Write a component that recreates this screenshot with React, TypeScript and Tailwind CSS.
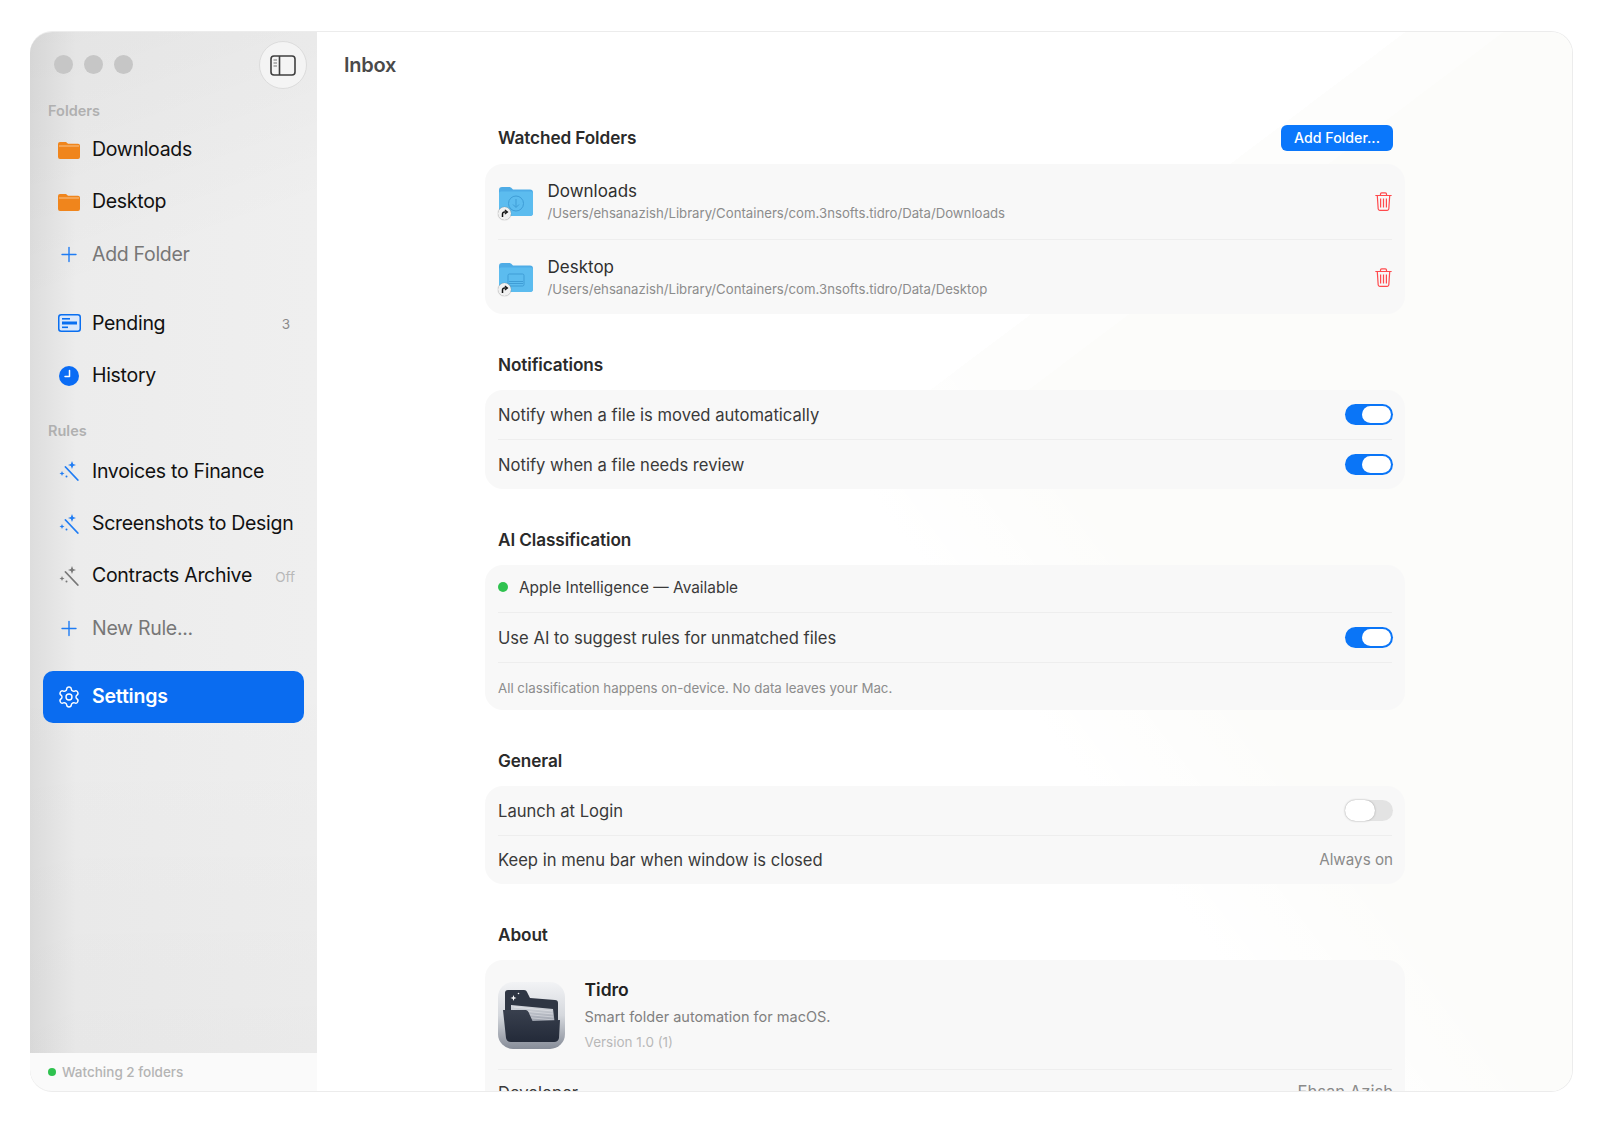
import type { ReactNode } from 'react'
import { Plus, Settings } from 'lucide-react'

function OrangeFolder() {
  return (
    <svg width="22" height="18" viewBox="0 0 22 18">
      <path d="M0 3a2 2 0 0 1 2-2h5c1 0 1.500.3 2.200 1l.8.800H20a2 2 0 0 1 2 2V16a2 2 0 0 1-2 2H2a2 2 0 0 1-2-2Z" fill="#f0851c" />
      <path d="M1 5h20" stroke="#f9c48c" strokeWidth="1" />
    </svg>
  )
}

function PendingIcon() {
  return (
    <svg width="23" height="18" viewBox="0 0 23 18">
      <rect x="0.75" y="0.75" width="21.500" height="16.500" rx="2.500" fill="#dbe8fb" stroke="#0a6ff0" strokeWidth="1.500" />
      <rect x="4" y="4" width="8" height="1.600" fill="#0a6ff0" />
      <rect x="4" y="7.500" width="15" height="3" fill="#0a6ff0" />
      <rect x="4" y="12.500" width="6" height="1.600" fill="#0a6ff0" />
    </svg>
  )
}

function HistoryIcon() {
  return (
    <svg width="20" height="20" viewBox="0 0 20 20">
      <circle cx="10" cy="10" r="10" fill="#0a6cf5" />
      <path d="M10.500 4.500v6H6" fill="none" stroke="#fff" strokeWidth="1.500" strokeLinecap="round" strokeLinejoin="round" />
    </svg>
  )
}

function WandIcon({ color }: { color: string }) {
  return (
    <svg width="20" height="20" viewBox="0 0 20 20" fill={color}>
      <path d="M6.500 6l12.300 13" stroke={color} strokeWidth="1.800" strokeLinecap="round" />
      <path d="M13 0l1.100 2.900 2.900 1.100-2.900 1.100-1.100 2.900-1.100-2.900-2.900-1.100 2.900-1.100Z" />
      <path d="M3 10l.7 1.800 1.800.7-1.800.7-.7 1.800-.7-1.800-1.800-.7 1.800-.7Z" />
      <circle cx="7.500" cy="15.500" r="1" />
    </svg>
  )
}

function SidebarToggleIcon() {
  return (
    <svg width="26" height="21" viewBox="0 0 26 21" fill="none" stroke="#3f3f3f">
      <rect x="1" y="1" width="24" height="19" rx="3" strokeWidth="1.600" />
      <path d="M9.500 1v19" strokeWidth="1.600" />
      <path d="M3.500 5h3.500M3.500 8h3.500M3.500 11h3.500" strokeWidth="1.100" stroke="#777" />
    </svg>
  )
}

function TrashIcon() {
  return (
    <svg width="17" height="19" viewBox="0 0 17 19" fill="none" stroke="#ff4a4d" strokeWidth="1.200" strokeLinejoin="round">
      <path d="M.8 3.500h15.400" strokeLinecap="round" />
      <path d="M5.500 3.300V2a1.200 1.200 0 0 1 1.200-1.200h3.600A1.200 1.200 0 0 1 11.500 2v1.300" />
      <path d="M2.300 3.700l.9 13.300a1.500 1.500 0 0 0 1.500 1.300h7.600a1.500 1.500 0 0 0 1.500-1.300l.9-13.300" />
      <path d="M5.600 6.500v9M8.500 6.500v9M11.400 6.500v9" />
    </svg>
  )
}

function BlueFolder({ kind }: { kind: 'down' | 'desk' }) {
  return (
    <div className="relative w-[34px] h-[29px] shrink-0 ml-[1px]">
      <svg width="34" height="29" viewBox="0 0 34 29">
        <path d="M0 3a3 3 0 0 1 3-3h7c1.500 0 2 .5 3 1.500l1 1h17a3 3 0 0 1 3 3V26a3 3 0 0 1-3 3H3a3 3 0 0 1-3-3Z" fill="#4eace6" />
        <path d="M0 6.500a2 2 0 0 1 2-2h30a2 2 0 0 1 2 2V26a3 3 0 0 1-3 3H3a3 3 0 0 1-3-3Z" fill="#5cbcef" />
        {kind === 'down' ? (
          <g fill="none" stroke="#3f9dd6" strokeWidth="1">
            <circle cx="17" cy="16.500" r="7.500" />
            <path d="M17 12v8M14 17.500l3 3 3-3" />
          </g>
        ) : (
          <g fill="none" stroke="#3f9dd6" strokeWidth="1">
            <rect x="9" y="11" width="16" height="12" rx="1.500" />
            <path d="M10 18.500h14M10 20.500h14" />
          </g>
        )}
      </svg>
      <div className="absolute left-[-1px] top-[20px] w-[13px] h-[13px] rounded-full bg-[#f1f1f1] shadow-[0_0_1px_#666] flex items-center justify-center">
        <svg width="9" height="9" viewBox="0 0 9 9" fill="none" stroke="#111" strokeWidth="1.500">
          <path d="M2.500 8V5a2 2 0 0 1 2-2H7" />
          <path d="M4.800.9 7.500 3 4.800 5.100" strokeWidth="1.200" />
        </svg>
      </div>
    </div>
  )
}

function AppIcon() {
  return (
    <svg width="67" height="67" viewBox="0 0 67 67" className="shrink-0 mt-[2px]">
      <defs>
        <linearGradient id="tile" x1="0" y1="0" x2="0" y2="1">
          <stop offset="0" stopColor="#f2f3f5" />
          <stop offset="0.5" stopColor="#d5d8dd" />
          <stop offset="1" stopColor="#868c98" />
        </linearGradient>
        <linearGradient id="front" x1="0" y1="0" x2="0" y2="1">
          <stop offset="0" stopColor="#39404e" />
          <stop offset="1" stopColor="#232a39" />
        </linearGradient>
        <linearGradient id="paper" x1="0" y1="0" x2="0" y2="1">
          <stop offset="0" stopColor="#d8dbe0" />
          <stop offset="1" stopColor="#8d93a0" />
        </linearGradient>
      </defs>
      <rect width="67" height="67" rx="15" fill="url(#tile)" />
      <path d="M7 11a3 3 0 0 1 3-3h16c1.500 0 2.500.8 3 2l3 6 25 2a3 3 0 0 1 3 3v22H7Z" fill="#2f3643" />
      <path d="M13 23l42 4 2 16H13Z" fill="url(#paper)" />
      <path d="M16 25l38 4M15 28l40 4M14 31l41 4M14 34l42 4" stroke="#f3f4f6" strokeWidth="0.600" opacity="0.700" />
      <path d="M5 28h22c1.500 0 2.500.5 3.500 2l4 9 27.500-1-1 18a5 5 0 0 1-5 4H13a5 5 0 0 1-5-4Z" fill="url(#front)" />
      <path d="M15.500 13l.8 2.200 2.200.8-2.200.8-.8 2.200-.8-2.200-2.200-.8 2.200-.8Z" fill="#fff" />
      <circle cx="20.500" cy="11.500" r="0.800" fill="#fff" />
    </svg>
  )
}

function NavRow({ icon, label, muted, trailing }: { icon: ReactNode; label: string; muted?: boolean; trailing?: ReactNode }) {
  return (
    <div className="h-[52.4px] flex items-center gap-[11px] pl-[14px] pr-[9px]">
      <div className="w-[24px] flex justify-center shrink-0">{icon}</div>
      <span className={`text-[19.500px] tracking-[-0.3px] whitespace-nowrap ${muted ? 'text-[#777777]' : 'text-[#111111]'}`}>{label}</span>
      {trailing && <div className="ml-auto">{trailing}</div>}
    </div>
  )
}

function SectionLabel({ children, className }: { children: ReactNode; className: string }) {
  return <div className={`h-[20px] pl-[5px] flex items-center text-[14.500px] font-semibold text-[#b0b0b0] ${className}`}>{children}</div>
}

function Toggle({ on = true }: { on?: boolean }) {
  if (!on) {
    return (
      <div className="w-[48px] h-[21px] mr-[-1px] rounded-full bg-[#e3e3e3]">
        <div className="w-[30px] h-[21px] rounded-full bg-white shadow-[0_0_2px_#999]" />
      </div>
    )
  }
  return (
    <div className="w-[48px] h-[21px] mr-[-1px] rounded-full bg-[#0a75f7] flex items-center justify-end pr-[2px]">
      <div className="w-[29px] h-[17px] rounded-full bg-white" />
    </div>
  )
}

function Section({ title, action, children }: { title: string; action?: ReactNode; children: ReactNode }) {
  return (
    <section className="mb-[37px]">
      <div className="h-[26px] mb-[13px] px-[13px] flex items-center justify-between">
        <h2 className={`text-[17.200px] font-semibold tracking-[-0.1px] text-[#2a2a2a] ${action ? '' : 'mt-[2px]'}`}>{title}</h2>
        {action}
      </div>
      <div className="rounded-[18px] bg-[#f8f8f8] px-[13px]">{children}</div>
    </section>
  )
}

function Row({ label, height, last, children }: { label: ReactNode; height: string; last?: boolean; children?: ReactNode }) {
  return (
    <div className={`flex items-center justify-between text-[16.600px] text-[#3a3a3a] ${height} ${last ? '' : 'border-b border-[#eeeeee]'}`}>
      <div className="pt-[1px]">{label}</div>
      {children}
    </div>
  )
}

function WatchedRow({ kind, name, path, height, last }: { kind: 'down' | 'desk'; name: string; path: string; height: string; last?: boolean }) {
  return (
    <div className={`flex items-center ${height} ${last ? '' : 'border-b border-[#eeeeee]'}`}>
      <BlueFolder kind={kind} />
      <div className="ml-[14.500px] pt-[1px]">
        <div className="text-[17px] leading-[22px] text-[#2f2f2f]">{name}</div>
        <div className="text-[13.200px] leading-[22px] text-[#8c8c8c]">{path}</div>
      </div>
      <div className="ml-auto"><TrashIcon /></div>
    </div>
  )
}

export default function App() {
  return (
    <div className="w-[1600px] h-[1126px] bg-white pt-[31px] pl-[30px] font-['Inter',sans-serif]">
      <div className="w-[1543px] h-[1061px] flex rounded-[22px] overflow-hidden border-t border-r border-b border-[#ececec]">
        <aside className="w-[287px] shrink-0 flex flex-col bg-[linear-gradient(160deg,rgba(0,0,0,0.035),transparent_260px),linear-gradient(180deg,transparent_60%,rgba(0,0,0,0.025)),linear-gradient(90deg,#dddddd_0%,#ececec_16%,#efefef_100%)]">
          <div className="h-[69px] shrink-0 flex items-start justify-between pl-[24px] pr-[10px] pt-[9px]">
            <div className="flex gap-[11.500px] pt-[14px]">
              <div className="w-[18.500px] h-[18.500px] rounded-full bg-[#c6c6c6]" />
              <div className="w-[18.500px] h-[18.500px] rounded-full bg-[#c6c6c6]" />
              <div className="w-[18.500px] h-[18.500px] rounded-full bg-[#c6c6c6]" />
            </div>
            <div className="w-[48px] h-[48px] rounded-full bg-[#f4f4f4] border border-[#dcdcdc] flex items-center justify-center">
              <SidebarToggleIcon />
            </div>
          </div>
          <div className="flex-1 pl-[13px] pr-[13px]">
            <SectionLabel className="mb-[2.500px]">Folders</SectionLabel>
            <NavRow icon={<OrangeFolder />} label="Downloads" />
            <NavRow icon={<OrangeFolder />} label="Desktop" />
            <NavRow icon={<Plus size={27} strokeWidth={1.400} color="#1f7cf4" />} label="Add Folder" muted />
            <div className="mt-[16.500px]">
              <NavRow icon={<PendingIcon />} label="Pending" trailing={<span className="mr-[5px] text-[13.500px] text-[#8a8a8a]">3</span>} />
              <NavRow icon={<HistoryIcon />} label="History" />
            </div>
            <div className="mt-[19px]">
              <SectionLabel className="mb-[4px]">Rules</SectionLabel>
              <NavRow icon={<WandIcon color="#1f7cf4" />} label="Invoices to Finance" />
              <NavRow icon={<WandIcon color="#1f7cf4" />} label="Screenshots to Design" />
              <NavRow icon={<WandIcon color="#777777" />} label="Contracts Archive" trailing={<span className="text-[13.500px] text-[#b8b8b8]">Off</span>} />
              <NavRow icon={<Plus size={27} strokeWidth={1.400} color="#1f7cf4" />} label="New Rule..." muted />
            </div>
            <div className="mt-[16.200px] h-[52px] rounded-[10px] bg-[#0a6cf0] flex items-center gap-[11px] pl-[14px]">
              <div className="w-[24px] flex justify-center"><Settings size={24} strokeWidth={1.400} color="#ffffff" /></div>
              <span className="text-[19.500px] font-semibold tracking-[-0.2px] text-white">Settings</span>
            </div>
          </div>
          <div className="h-[38px] shrink-0 bg-[#fafafa] flex items-center pl-[18px] gap-[6px]">
            <div className="w-[8px] h-[8px] rounded-full bg-[#2fc24f]" />
            <span className="text-[13.500px] font-medium text-[#b4b4b4]">Watching 2 folders</span>
          </div>
        </aside>
        <main className="flex-1 overflow-hidden bg-[linear-gradient(53deg,#ffffff_800px,transparent_980px),linear-gradient(143deg,#ffffff_655px,#fdfdfc_655px,#fdfdfc_714px,#fcfcfa_714px)]">
          <div className="h-[65px] flex items-center pl-[27px] text-[20px] font-semibold tracking-[-0.25px] text-[#4a4a4a]">Inbox</div>
          <div className="w-[920px] ml-[168px] pt-[28px]">
            <Section
              title="Watched Folders"
              action={<button className="w-[112px] h-[26px] mr-[-1px] rounded-[6px] bg-[#0a77fb] text-[14.200px] font-medium text-white">Add Folder...</button>}
            >
              <WatchedRow kind="down" height="h-[76px]" name="Downloads" path="/Users/ehsanazish/Library/Containers/com.3nsofts.tidro/Data/Downloads" />
              <WatchedRow kind="desk" height="h-[74px]" name="Desktop" path="/Users/ehsanazish/Library/Containers/com.3nsofts.tidro/Data/Desktop" last />
            </Section>
            <Section title="Notifications">
              <Row label="Notify when a file is moved automatically" height="h-[50px]"><Toggle /></Row>
              <Row label="Notify when a file needs review" height="h-[49px]" last><Toggle /></Row>
            </Section>
            <Section title="AI Classification">
              <Row
                height="h-[48px]"
                label={
                  <div className="flex items-center gap-[11px] text-[15.400px] mt-[-3px]">
                    <div className="w-[10px] h-[10px] rounded-full bg-[#2fc24f]" />
                    Apple Intelligence — Available
                  </div>
                }
              />
              <Row label="Use AI to suggest rules for unmatched files" height="h-[50px]"><Toggle /></Row>
              <Row label={<span className="text-[13.300px] text-[#8c8c8c]">All classification happens on-device. No data leaves your Mac.</span>} height="h-[47px]" last />
            </Section>
            <Section title="General">
              <Row label="Launch at Login" height="h-[50px]"><Toggle on={false} /></Row>
              <Row label="Keep in menu bar when window is closed" height="h-[48px]" last>
                <span className="mr-[-1px] text-[15.200px] text-[#8a8a8a]">Always on</span>
              </Row>
            </Section>
            <Section title="About">
              <div className="h-[110px] flex items-center border-b border-[#eeeeee]">
                <AppIcon />
                <div className="ml-[19.500px]">
                  <div className="text-[17.500px] leading-[24px] font-semibold text-[#222222]">Tidro</div>
                  <div className="mt-[4px] text-[14.500px] leading-[22px] text-[#808080]">Smart folder automation for macOS.</div>
                  <div className="mt-[4px] text-[13.500px] leading-[20px] text-[#b8b8b8]">Version 1.0 (1)</div>
                </div>
              </div>
              <Row label="Developer" height="h-[45px]" last>
                <span className="mr-[-1px] text-[16.600px] text-[#8a8a8a]">Ehsan Azish</span>
              </Row>
            </Section>
          </div>
        </main>
      </div>
    </div>
  )
}
